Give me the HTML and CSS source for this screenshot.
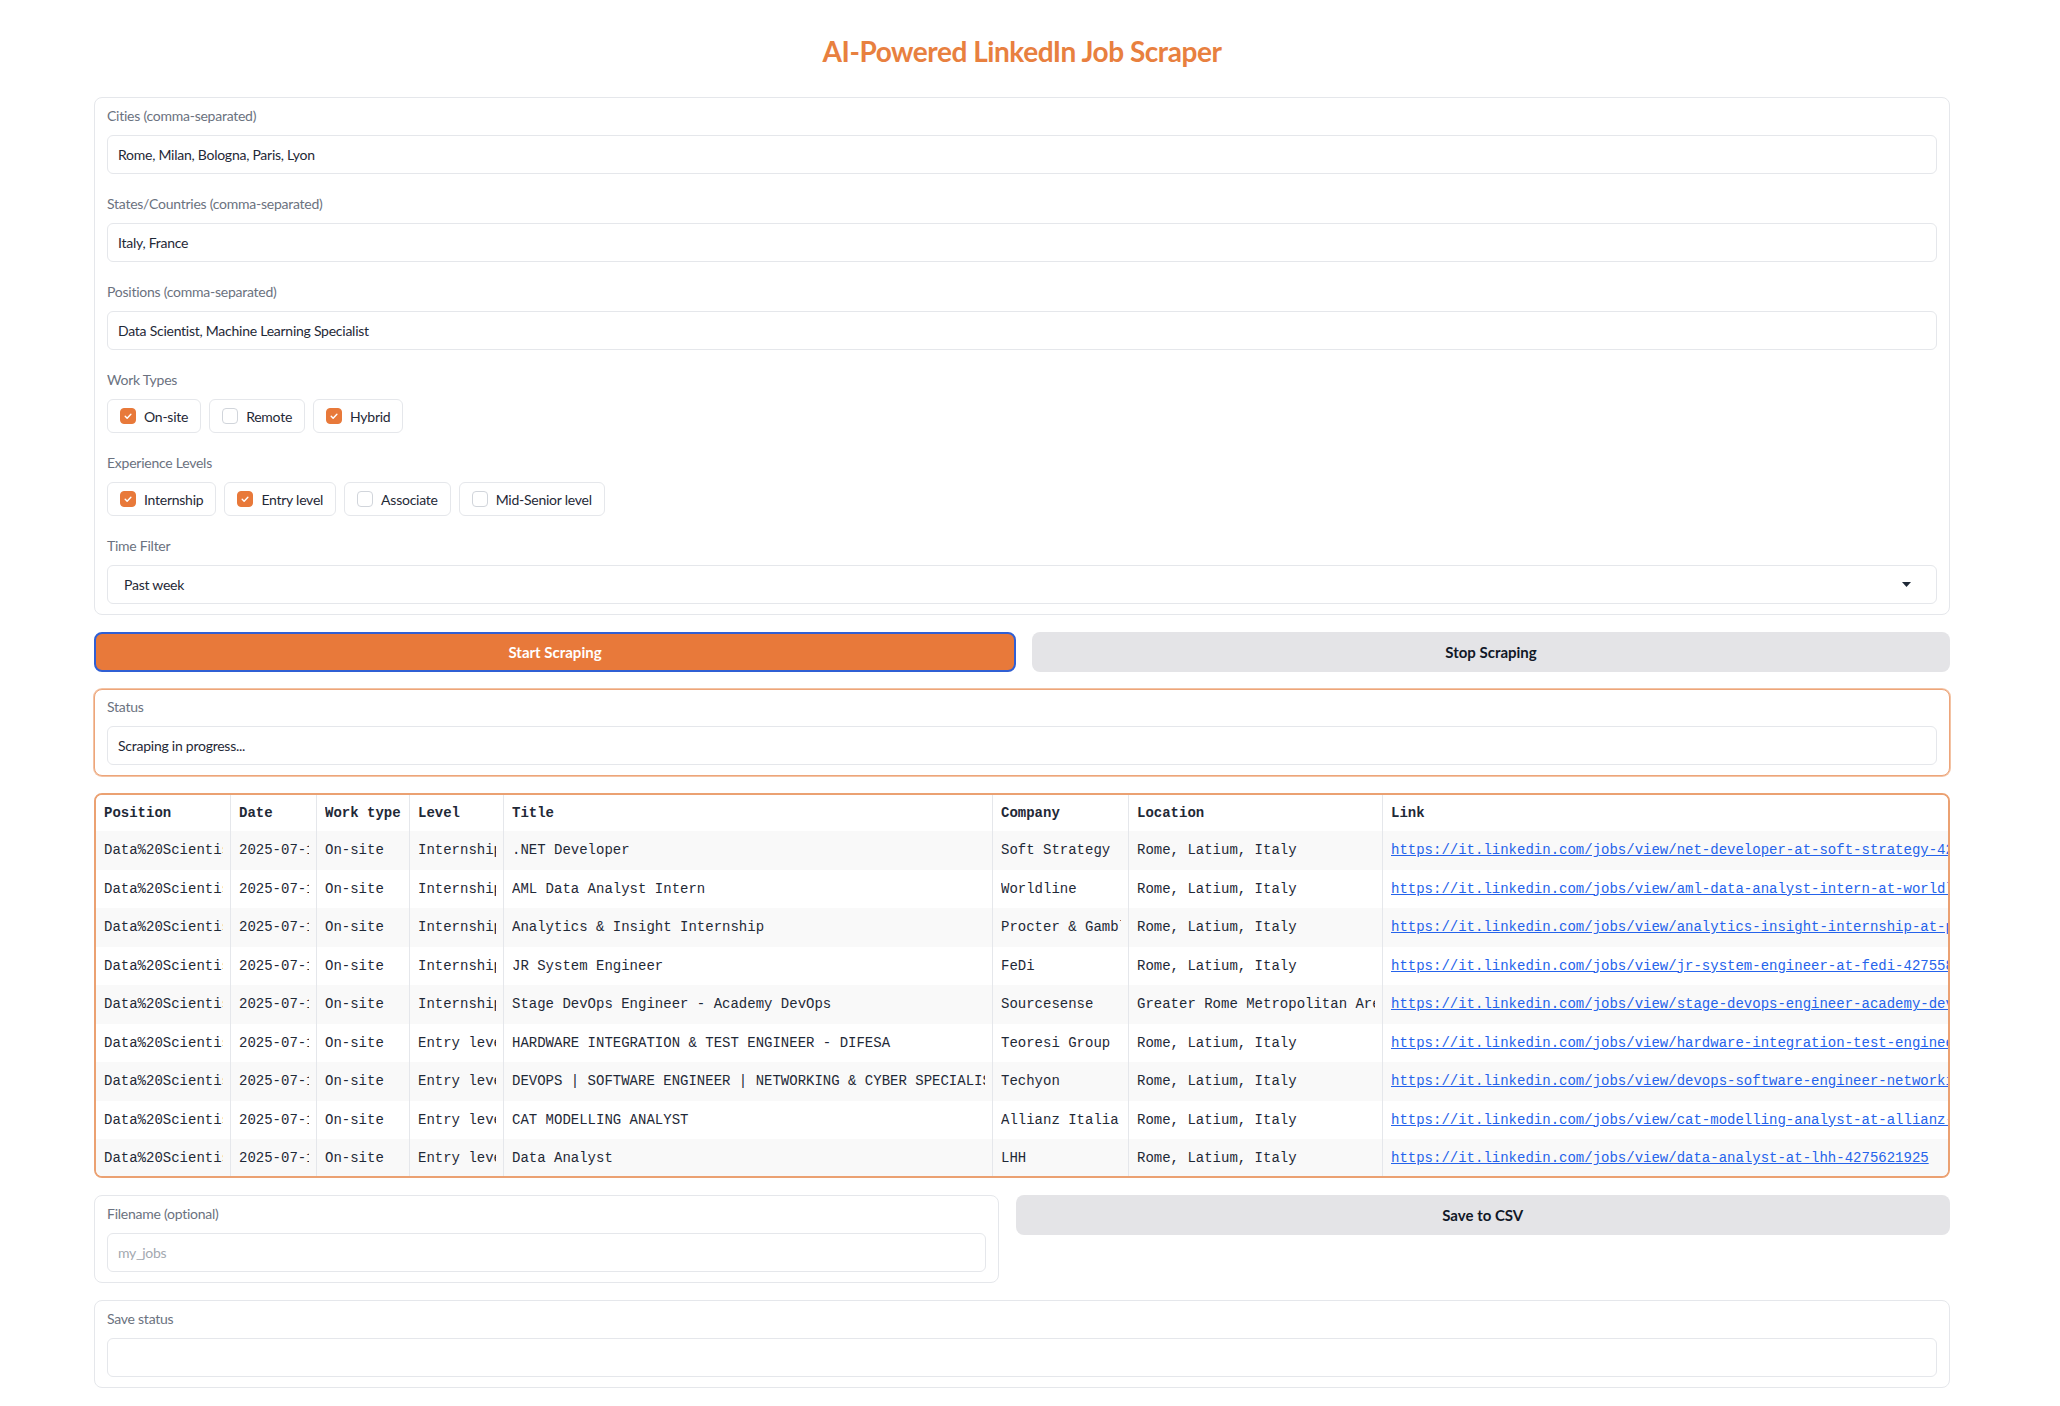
FILE: index.html
```html
<!DOCTYPE html>
<html lang="en">
<head>
<meta charset="utf-8">
<title>AI-Powered LinkedIn Job Scraper</title>
<link rel="stylesheet" href="styles.css">
</head>
<body>
<main class="app">
  <h1 class="title">AI-Powered LinkedIn Job Scraper</h1>

  <section class="panel form">
    <div class="field">
      <span class="label">Cities (comma-separated)</span>
      <div class="input">Rome, Milan, Bologna, Paris, Lyon</div>
    </div>
    <div class="field">
      <span class="label">States/Countries (comma-separated)</span>
      <div class="input">Italy, France</div>
    </div>
    <div class="field">
      <span class="label">Positions (comma-separated)</span>
      <div class="input">Data Scientist, Machine Learning Specialist</div>
    </div>
    <div class="field">
      <span class="label">Work Types</span>
      <div class="checks">
        <div class="check"><span class="box on"><svg viewBox="0 0 16 16" width="16" height="16"><path d="M4.8 8.3l2.2 2.2 4.3-4.6" /></svg></span>On-site</div>
        <div class="check"><span class="box"></span>Remote</div>
        <div class="check"><span class="box on"><svg viewBox="0 0 16 16" width="16" height="16"><path d="M4.8 8.3l2.2 2.2 4.3-4.6" /></svg></span>Hybrid</div>
      </div>
    </div>
    <div class="field">
      <span class="label">Experience Levels</span>
      <div class="checks">
        <div class="check"><span class="box on"><svg viewBox="0 0 16 16" width="16" height="16"><path d="M4.8 8.3l2.2 2.2 4.3-4.6" /></svg></span>Internship</div>
        <div class="check"><span class="box on"><svg viewBox="0 0 16 16" width="16" height="16"><path d="M4.8 8.3l2.2 2.2 4.3-4.6" /></svg></span>Entry level</div>
        <div class="check"><span class="box"></span>Associate</div>
        <div class="check"><span class="box"></span>Mid-Senior level</div>
      </div>
    </div>
    <div class="field">
      <span class="label">Time Filter</span>
      <div class="input select"><span>Past week</span><svg class="caret" viewBox="0 0 9 5" width="9" height="5"><path d="M0 0h9L4.5 5z"/></svg></div>
    </div>
  </section>

  <div class="btn-row">
    <button class="btn primary">Start Scraping</button>
    <button class="btn secondary">Stop Scraping</button>
  </div>

  <section class="panel status">
    <span class="label">Status</span>
    <div class="input">Scraping in progress...</div>
  </section>

  <div class="table-wrap">
    <table class="jobs">
      <colgroup>
        <col class="w-pos"><col class="w-date"><col class="w-type"><col class="w-level"><col class="w-title"><col class="w-company"><col class="w-loc"><col class="w-link">
      </colgroup>
      <thead>
        <tr><th><div class="c">Position</div></th><th><div class="c">Date</div></th><th><div class="c">Work type</div></th><th><div class="c">Level</div></th><th><div class="c">Title</div></th><th><div class="c">Company</div></th><th><div class="c">Location</div></th><th><div class="c">Link</div></th></tr>
      </thead>
      <tbody>
        <tr><td><div class="c">Data%20Scientist</div></td><td><div class="c">2025-07-15</div></td><td><div class="c">On-site</div></td><td><div class="c">Internship</div></td><td><div class="c">.NET Developer</div></td><td><div class="c">Soft Strategy</div></td><td><div class="c">Rome, Latium, Italy</div></td><td><a href="#">https://it.linkedin.com/jobs/view/net-developer-at-soft-strategy-4275634812</a></td></tr>
        <tr><td><div class="c">Data%20Scientist</div></td><td><div class="c">2025-07-15</div></td><td><div class="c">On-site</div></td><td><div class="c">Internship</div></td><td><div class="c">AML Data Analyst Intern</div></td><td><div class="c">Worldline</div></td><td><div class="c">Rome, Latium, Italy</div></td><td><a href="#">https://it.linkedin.com/jobs/view/aml-data-analyst-intern-at-worldline-4275219870</a></td></tr>
        <tr><td><div class="c">Data%20Scientist</div></td><td><div class="c">2025-07-14</div></td><td><div class="c">On-site</div></td><td><div class="c">Internship</div></td><td><div class="c">Analytics &amp; Insight Internship</div></td><td><div class="c">Procter &amp; Gamble</div></td><td><div class="c">Rome, Latium, Italy</div></td><td><a href="#">https://it.linkedin.com/jobs/view/analytics-insight-internship-at-procter-gamble-4274981236</a></td></tr>
        <tr><td><div class="c">Data%20Scientist</div></td><td><div class="c">2025-07-14</div></td><td><div class="c">On-site</div></td><td><div class="c">Internship</div></td><td><div class="c">JR System Engineer</div></td><td><div class="c">FeDi</div></td><td><div class="c">Rome, Latium, Italy</div></td><td><a href="#">https://it.linkedin.com/jobs/view/jr-system-engineer-at-fedi-4275581203</a></td></tr>
        <tr><td><div class="c">Data%20Scientist</div></td><td><div class="c">2025-07-13</div></td><td><div class="c">On-site</div></td><td><div class="c">Internship</div></td><td><div class="c">Stage DevOps Engineer - Academy DevOps</div></td><td><div class="c">Sourcesense</div></td><td><div class="c">Greater Rome Metropolitan Area</div></td><td><a href="#">https://it.linkedin.com/jobs/view/stage-devops-engineer-academy-devops-at-sourcesense-4274410928</a></td></tr>
        <tr><td><div class="c">Data%20Scientist</div></td><td><div class="c">2025-07-15</div></td><td><div class="c">On-site</div></td><td><div class="c">Entry level</div></td><td><div class="c">HARDWARE INTEGRATION &amp; TEST ENGINEER - DIFESA</div></td><td><div class="c">Teoresi Group</div></td><td><div class="c">Rome, Latium, Italy</div></td><td><a href="#">https://it.linkedin.com/jobs/view/hardware-integration-test-engineer-difesa-at-teoresi-group-4275110347</a></td></tr>
        <tr><td><div class="c">Data%20Scientist</div></td><td><div class="c">2025-07-14</div></td><td><div class="c">On-site</div></td><td><div class="c">Entry level</div></td><td><div class="c">DEVOPS | SOFTWARE ENGINEER | NETWORKING &amp; CYBER SPECIALIST</div></td><td><div class="c">Techyon</div></td><td><div class="c">Rome, Latium, Italy</div></td><td><a href="#">https://it.linkedin.com/jobs/view/devops-software-engineer-networking-cyber-specialist-at-techyon-4274873365</a></td></tr>
        <tr><td><div class="c">Data%20Scientist</div></td><td><div class="c">2025-07-13</div></td><td><div class="c">On-site</div></td><td><div class="c">Entry level</div></td><td><div class="c">CAT MODELLING ANALYST</div></td><td><div class="c">Allianz Italia</div></td><td><div class="c">Rome, Latium, Italy</div></td><td><a href="#">https://it.linkedin.com/jobs/view/cat-modelling-analyst-at-allianz-italia-4274350021</a></td></tr>
        <tr><td><div class="c">Data%20Scientist</div></td><td><div class="c">2025-07-15</div></td><td><div class="c">On-site</div></td><td><div class="c">Entry level</div></td><td><div class="c">Data Analyst</div></td><td><div class="c">LHH</div></td><td><div class="c">Rome, Latium, Italy</div></td><td><a href="#">https://it.linkedin.com/jobs/view/data-analyst-at-lhh-4275621925</a></td></tr>
      </tbody>
    </table>
  </div>

  <div class="save-row">
    <section class="panel">
      <span class="label">Filename (optional)</span>
      <div class="input placeholder">my_jobs</div>
    </section>
    <button class="btn secondary save">Save to CSV</button>
  </div>

  <section class="panel">
    <span class="label">Save status</span>
    <div class="input"></div>
  </section>
</main>
</body>
</html>
```

FILE: styles.css
```css
* { box-sizing: border-box; }

html, body {
  margin: 0;
  padding: 0;
  background: #ffffff;
}

body {
  font-family: Lato, "Noto Sans", "Liberation Sans", sans-serif;
  color: #1f2937;
}

.app {
  width: 1856px;
  margin-left: 94px;
  padding-top: 33px;
  padding-bottom: 18px;
  display: flex;
  flex-direction: column;
  gap: 17px;
}

.title {
  margin: 0 0 11px;
  text-align: center;
  font-size: 28px;
  line-height: 36px;
  font-weight: 700;
  letter-spacing: -0.45px;
  color: #e8803f;
}

.panel {
  border: 1px solid #e5e7eb;
  border-radius: 8px;
  background: #ffffff;
  padding: 8px 12px 10px;
}

.form {
  display: flex;
  flex-direction: column;
  gap: 20px;
}

.label {
  display: block;
  font-size: 14px;
  line-height: 20px;
  letter-spacing: -0.25px;
  color: #6b7280;
  margin-bottom: 9px;
}

.input {
  height: 39px;
  border: 1px solid #e5e7eb;
  border-radius: 6px;
  padding: 0 10px;
  display: flex;
  align-items: center;
  font-size: 14px;
  letter-spacing: -0.25px;
  color: #1f2937;
  background: #ffffff;
}

.placeholder { color: #a3a8b0; }

.select {
  justify-content: space-between;
  padding: 0 25px 0 16px;
}

.caret { fill: #1f2937; }

.checks {
  display: flex;
  gap: 8px;
}

.check {
  height: 34px;
  display: flex;
  align-items: center;
  gap: 8px;
  padding: 0 12px;
  border: 1px solid #e5e7eb;
  border-radius: 6px;
  font-size: 14px;
  letter-spacing: -0.25px;
  color: #1f2937;
}

.box {
  width: 16px;
  height: 16px;
  border-radius: 4px;
  border: 1px solid #d1d5db;
  background: #ffffff;
  display: flex;
  align-items: center;
  justify-content: center;
  flex: none;
}

.box.on {
  background: #e8793a;
  border-color: #e8793a;
}

.box svg path {
  fill: none;
  stroke: #ffffff;
  stroke-width: 1.6;
  stroke-linecap: round;
  stroke-linejoin: round;
}

.btn-row {
  display: flex;
  gap: 16px;
}

.btn {
  flex: 1;
  height: 40px;
  border: none;
  border-radius: 8px;
  font-family: Lato, "Noto Sans", sans-serif;
  font-weight: 700;
  font-size: 15px;
  cursor: pointer;
}

.primary {
  background: #e8793a;
  color: #ffffff;
  border: 2px solid #2f5fd4;
}

.secondary {
  background: #e4e4e7;
  color: #111827;
}

.status {
  border-color: #eda57a;
  box-shadow: 0 0 0 1px #f3c3a4;
  padding-top: 7px;
}

.table-wrap {
  height: 385px;
  border: 2px solid #eba172;
  border-radius: 8px;
  overflow: hidden;
}

.jobs {
  width: 1852px;
  table-layout: fixed;
  border-collapse: separate;
  border-spacing: 0;
  font-family: "Liberation Mono", "DejaVu Sans Mono", monospace;
  font-size: 14px;
  color: #1f2937;
}

.w-pos { width: 135px; }
.w-date { width: 86px; }
.w-type { width: 93px; }
.w-level { width: 94px; }
.w-title { width: 489px; }
.w-company { width: 136px; }
.w-loc { width: 254px; }
.w-link { width: 565px; }

.jobs th,
.jobs td {
  padding: 0 7px 0 8px;
  border-right: 1px solid #e5e7eb;
  text-align: left;
  white-space: nowrap;
  overflow: hidden;
}

.jobs th:last-child,
.jobs td:last-child {
  border-right: none;
  padding-right: 0;
}

.jobs th {
  height: 36px;
  font-weight: 700;
  background: #ffffff;
}

.jobs td {
  height: 38.5px;
}

.jobs tbody tr:nth-child(odd) td {
  background: #f9f9f9;
}

.c {
  overflow: hidden;
  white-space: nowrap;
}

.jobs a {
  color: #2563eb;
  text-decoration: underline;
}

.save-row {
  display: grid;
  grid-template-columns: 904.5px 1fr;
  gap: 17px;
  align-items: start;
}

.save {
  height: 40px;
  width: 100%;
}
```
